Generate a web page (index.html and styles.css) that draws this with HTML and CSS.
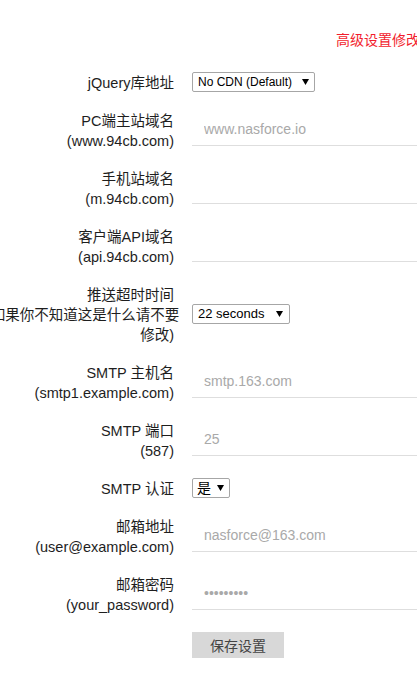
FILE: index.html
```html
<!DOCTYPE html>
<html lang="zh-CN">
<head>
    <meta charset="UTF-8">
    <meta name="viewport" content="width=device-width, initial-scale=1.0">
    <title>高级设置</title>
    <link rel="stylesheet" href="styles.css">
</head>
<body>
    <div class="page">
        <p class="notice">高级设置修改后请重启服务生效</p>

        <form class="settings">
            <label class="label"><span>jQuery库地址</span></label>
            <div class="field">
                <span class="select-box jquery">
                    <select>
                        <option>No CDN (Default)</option>
                    </select>
                    <svg class="arrow" width="7" height="6" viewBox="0 0 7 6"><path d="M0 0H7L3.5 6Z" fill="#000"/></svg>
                </span>
            </div>

            <label class="label"><span>PC端主站域名</span><span>(www.94cb.com)</span></label>
            <div class="field"><input type="text" class="text-input" placeholder="www.nasforce.io"></div>

            <label class="label"><span>手机站域名</span><span>(m.94cb.com)</span></label>
            <div class="field"><input type="text" class="text-input"></div>

            <label class="label"><span>客户端API域名</span><span>(api.94cb.com)</span></label>
            <div class="field"><input type="text" class="text-input"></div>

            <label class="label"><span>推送超时时间</span><span>(如果你不知道这是什么请不要</span><span>修改)</span></label>
            <div class="field">
                <span class="select-box timeout">
                    <select>
                        <option>22 seconds</option>
                    </select>
                    <svg class="arrow" width="7" height="6" viewBox="0 0 7 6"><path d="M0 0H7L3.5 6Z" fill="#000"/></svg>
                </span>
            </div>

            <label class="label"><span>SMTP 主机名</span><span>(smtp1.example.com)</span></label>
            <div class="field"><input type="text" class="text-input" placeholder="smtp.163.com"></div>

            <label class="label"><span>SMTP 端口</span><span>(587)</span></label>
            <div class="field"><input type="text" class="text-input" placeholder="25"></div>

            <label class="label"><span>SMTP 认证</span></label>
            <div class="field">
                <span class="select-box auth">
                    <select>
                        <option>是</option>
                        <option>否</option>
                    </select>
                    <svg class="arrow" width="7" height="6" viewBox="0 0 7 6"><path d="M0 0H7L3.5 6Z" fill="#000"/></svg>
                </span>
            </div>

            <label class="label"><span>邮箱地址</span><span>(user@example.com)</span></label>
            <div class="field"><input type="text" class="text-input" placeholder="nasforce@163.com"></div>

            <label class="label"><span>邮箱密码</span><span>(your_password)</span></label>
            <div class="field"><input type="password" class="text-input" placeholder="•••••••••"></div>

            <div></div>
            <div class="field"><button type="button" class="save">保存设置</button></div>
        </form>
    </div>
</body>
</html>
```

FILE: styles.css
```css
* {
    box-sizing: border-box;
}
body {
    margin: 0;
    overflow: hidden;
    background: #fff;
    color: #1e1e1e;
    font-family: "Liberation Sans", "Noto Sans CJK SC", sans-serif;
    font-size: 14px;
}
.page {
    width: 620px;
    margin-left: -14px;
    padding-top: 30px;
}
.notice {
    margin: 0 0 22px 350px;
    height: 20px;
    line-height: 20px;
    color: #f21d2d;
    white-space: nowrap;
}
.settings {
    display: grid;
    grid-template-columns: 188px 400px;
    column-gap: 18px;
    row-gap: 18px;
}
.label {
    text-align: right;
    white-space: nowrap;
}
.label span {
    display: block;
    height: 20px;
    line-height: 20px;
    padding-top: 1px;
    font-size: 14.5px;
}
.field {
    display: flex;
    align-items: center;
}
.text-input {
    align-self: flex-start;
    margin-top: 2px;
    width: 100%;
    height: 34px;
    padding: 0 0 0 12px;
    border: none;
    border-bottom: 1px solid #dedede;
    outline: none;
    font-family: "Liberation Sans", "Noto Sans CJK SC", sans-serif;
    font-size: 14px;
    color: #333;
}
.text-input::placeholder {
    color: #a9a9a9;
}
.select-box {
    position: relative;
    display: inline-block;
}
.select-box select {
    appearance: none;
    -webkit-appearance: none;
    height: 20px;
    padding: 0 0 0 5px;
    border: 1px solid #a6a6a6;
    border-radius: 2px;
    background: #fff;
    color: #000;
    font-family: "Liberation Sans", "Noto Sans CJK SC", sans-serif;
    font-size: 13px;
    line-height: 18px;
}
.select-box .arrow {
    position: absolute;
    right: 6px;
    top: 7px;
    pointer-events: none;
}
.jquery select {
    width: 123px;
    font-size: 12px;
}
.timeout select {
    width: 98px;
    font-size: 13px;
}
.timeout .arrow {
    right: 7px;
}
.auth select {
    width: 38px;
    font-size: 14px;
    padding-left: 4px;
}
.save {
    width: 92px;
    height: 26px;
    border: none;
    background: #d8d8d8;
    color: #444;
    font-family: "Liberation Sans", "Noto Sans CJK SC", sans-serif;
    font-size: 14px;
    cursor: pointer;
}
```
